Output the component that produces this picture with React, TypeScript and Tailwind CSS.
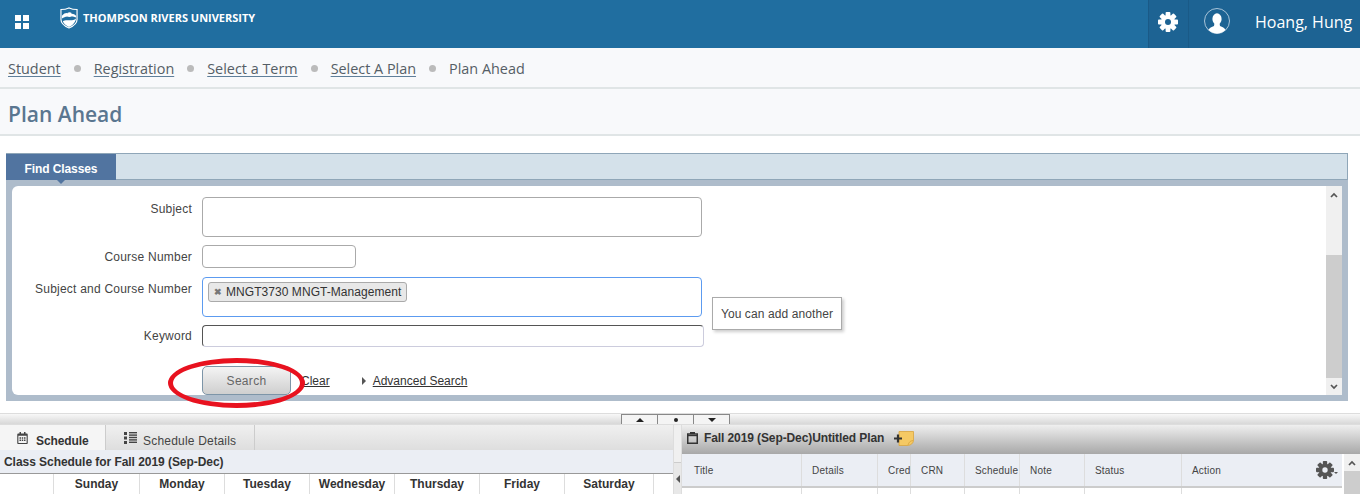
import { FaRegCalendarAlt } from "react-icons/fa";

const crumbs = ["Student", "Registration", "Select a Term", "Select A Plan"];
const days = [
  { name: "Sunday", w: "w-[86px]" },
  { name: "Monday", w: "w-[85px]" },
  { name: "Tuesday", w: "w-[85px]" },
  { name: "Wednesday", w: "w-[85px]" },
  { name: "Thursday", w: "w-[85px]" },
  { name: "Friday", w: "w-[85px]" },
  { name: "Saturday", w: "w-[89px]" },
];
const columns = [
  { name: "Title", w: "w-[120px]", pl: "pl-[12px]" },
  { name: "Details", w: "w-[76px]", pl: "pl-[10px]" },
  { name: "Cred", w: "w-[33px]", pl: "pl-[10px]" },
  { name: "CRN", w: "w-[54px]", pl: "pl-[10px]" },
  { name: "Schedule", w: "w-[55px]", pl: "pl-[10px]" },
  { name: "Note", w: "w-[65px]", pl: "pl-[10px]" },
  { name: "Status", w: "w-[97px]", pl: "pl-[10px]" },
];

const Logo = () => (
  <svg width="18" height="22" viewBox="0 0 19 23" fill="none">
    <path d="M1 2.5 C6 2.5 8 1.5 9.5 0.8 C11 1.5 13 2.5 18 2.5 V13 C18 18 13 20.5 9.5 22 C6 20.5 1 18 1 13 Z" stroke="white" strokeWidth="1.2" />
    <circle cx="10" cy="8" r="2.5" fill="white" />
    <path d="M2 9 C6 5 8 6 10 8 C12 6 15 7 17 9 L17 11 C12 9 7 9 2 12 Z" fill="white" />
    <path d="M3 15 C7 12 12 16 17 12 C16 17 12 20 9.5 21 C7 20 4 18 3 15 Z" fill="white" />
  </svg>
);

// eight square teeth, like the font-awesome cog
const Gear = ({ size, color }: { size: number; color: string }) => (
  <svg width={size} height={size} viewBox="0 0 20 20">
    {[0, 45, 90, 135].map((a) => (
      <rect key={a} x="7.6" y="0" width="4.8" height="20" rx="0.9" fill={color} transform={`rotate(${a} 10 10)`} />
    ))}
    <circle cx="10" cy="10" r="7" fill={color} />
    <circle cx="10" cy="10" r="3" fill="var(--hole)" />
  </svg>
);

const UserIcon = () => (
  <svg width="26" height="26" viewBox="0 0 26 26">
    <defs>
      <clipPath id="userClip">
        <circle cx="13" cy="13" r="12.5" />
      </clipPath>
    </defs>
    <circle cx="13" cy="13" r="12.5" fill="none" stroke="#a9c4d8" strokeWidth="1" />
    <g clipPath="url(#userClip)" fill="white">
      <ellipse cx="13" cy="11" rx="4.6" ry="5.8" />
      <path d="M10.5 15 L15.5 15 L16 18 C19 19.5 22 20 23 26 L3 26 C4 20 7 19.5 10 18 Z" />
    </g>
  </svg>
);

const ListIcon = () => (
  <svg width="13" height="12" viewBox="0 0 13 12" fill="#444">
    <rect x="0" y="0" width="3" height="3" />
    <rect x="0" y="4.5" width="3" height="3" />
    <rect x="0" y="9" width="3" height="3" />
    <rect x="5" y="0" width="8" height="1.4" />
    <rect x="5" y="2.4" width="8" height="1.4" />
    <rect x="5" y="4.8" width="8" height="1.4" />
    <rect x="5" y="7.2" width="8" height="1.4" />
    <rect x="5" y="9.6" width="8" height="1.4" />
  </svg>
);

const ClipIcon = () => (
  <svg width="11" height="12" viewBox="0 0 11 12" fill="none">
    <rect x="0.75" y="2" width="9.5" height="9.25" stroke="#333" strokeWidth="1.5" />
    <rect x="3" y="0" width="5" height="2" fill="#333" />
    <rect x="1" y="3" width="9" height="1.2" fill="#333" />
  </svg>
);

const NoteIcon = () => (
  <svg width="20" height="15" viewBox="0 0 20 15">
    <path d="M5 0.5 H19.5 V9 C19.5 12 17 14.5 13 14.5 H5 Z" fill="#f5c964" stroke="#d9a53d" strokeWidth="0.8" />
    <path d="M14 14 C15 11 16 10 19 9.5" fill="none" stroke="#d9a53d" strokeWidth="0.8" />
    <path d="M0 7.5 H8 M4 3.5 V11.5" stroke="#333" strokeWidth="2.2" />
  </svg>
);

const Arrow = ({ dir }: { dir: "up" | "down" }) => (
  <svg width="8" height="6" viewBox="0 0 8 6" fill="none">
    <path d={dir === "up" ? "M1 5 L4 2 L7 5" : "M1 1 L4 4 L7 1"} stroke="#555" strokeWidth="1.7" />
  </svg>
);

const Label = ({ children }: { children: string }) => (
  <div className="w-[180px] shrink-0 text-right text-[12px] tracking-[0.22px] text-[#444]">{children}</div>
);

export default function App() {
  return (
    <div className="relative h-[494px] w-[1360px] overflow-hidden bg-white font-['Liberation_Sans',sans-serif]">
      {/* top bar */}
      <header className="flex h-[48px] bg-[#206ea0] text-white">
        <div className="ml-[15px] mt-[15px] grid h-[14px] w-[14px] grid-cols-2 gap-[2px]">
          <span className="bg-white" />
          <span className="bg-white" />
          <span className="bg-white" />
          <span className="bg-white" />
        </div>
        <div className="ml-[31px] mt-[7px] flex h-[24px] items-start gap-[5px]">
          <Logo />
          <span className="mt-[4px] font-['Open_Sans',sans-serif] text-[11px] font-bold leading-[13px] text-white">
            THOMPSON RIVERS UNIVERSITY
          </span>
        </div>
        <div className="ml-auto flex w-[212px] bg-[#1d6393]">
          <div className="h-[48px] w-[40px] border-l border-[#1a5a87] pl-[9px] pt-[12px] [--hole:#1d6393]">
            <Gear size={20} color="#fff" />
          </div>
          <div className="flex flex-1 items-start border-l border-[#1a5a87] pl-[15px] pt-[8px]">
            <UserIcon />
            <span className="ml-[25px] font-['Open_Sans',sans-serif] text-[16px] leading-[28px] text-white">
              Hoang, Hung
            </span>
          </div>
        </div>
      </header>

      {/* breadcrumb */}
      <nav className="flex h-[41px] items-center border-b-2 border-[#e0e5e6] bg-[#f8f9fb] pl-[8px] pt-[2px] font-['Open_Sans',sans-serif] text-[14.4px] text-[#555e66]">
        {crumbs.map((c) => (
          <span key={c} className="flex items-center">
            <span className="underline decoration-[#5f7f9a] underline-offset-2">{c}</span>
            <span className="mx-[13px] h-[7px] w-[7px] rounded-full bg-[#bbb]" />
          </span>
        ))}
        <span>Plan Ahead</span>
      </nav>

      {/* page title */}
      <div className="flex h-[47px] items-center border-b-2 border-[#e0e5e6] bg-[#f8f9fb] pl-[8px] pt-[6px] font-['Open_Sans',sans-serif] text-[21px] font-semibold text-[#5a7690]">
        Plan Ahead
      </div>

      {/* find classes panel */}
      <section className="ml-[6px] mt-[17px] h-[248px] w-[1342px]">
        <div className="flex h-[27px] border border-[#8fa6b8] bg-[#d4e1ea]">
          <div className="relative -ml-px flex h-[26px] w-[110px] items-end justify-center bg-[#5174a0] pb-[2px] text-[12px] font-bold tracking-[-0.1px] text-white">
            Find Classes
            <span className="absolute -bottom-[4px] left-[51px] h-0 w-0 border-x-[4px] border-t-[4px] border-x-transparent border-t-[#5174a0]" />
          </div>
        </div>
        <div className="h-[221px] bg-[#aebccb] p-[6px]">
          <div className="flex h-[209px] rounded-l-[6px] bg-white">
            <div className="flex-1 pt-[11px]">
              <div className="flex items-start gap-[10px]">
                <div className="pt-[3px]">
                  <Label>Subject</Label>
                </div>
                <div className="h-[40px] w-[500px] rounded-[4px] border border-[#aaa] bg-white" />
              </div>
              <div className="mt-[8px] flex items-center gap-[10px]">
                <Label>Course Number</Label>
                <div className="h-[23px] w-[154px] rounded-[4px] border border-[#aaa] bg-white" />
              </div>
              <div className="mt-[9px] flex items-start gap-[10px]">
                <div className="pt-[3px]">
                  <Label>Subject and Course Number</Label>
                </div>
                <div className="h-[40px] w-[500px] rounded-[4px] border border-[#5c9bf0] bg-white pl-[5px] pt-[4px]">
                  <div className="flex h-[20px] w-[199px] items-center whitespace-nowrap rounded-[3px] border border-[#aaa] bg-[#e8e8e8] pl-[5px] text-[12px] tracking-[0.05px] text-[#333]">
                    <span className="mr-[4px] text-[9px] font-bold leading-none text-[#777]">✖</span>
                    MNGT3730 MNGT-Management
                  </div>
                </div>
                <div className="mt-[20px] flex h-[33px] w-[130px] items-center justify-center border border-[#aaa] bg-white text-[12px] tracking-[0.1px] text-[#444] shadow-[2px_2px_3px_rgba(0,0,0,0.2)]">
                  You can add another
                </div>
              </div>
              <div className="-mt-[5px] flex items-center gap-[10px]">
                <Label>Keyword</Label>
                <div className="h-[22px] w-[502px] rounded-[4px] border border-[#ccd] border-l-[#555] border-t-[#555] bg-white" />
              </div>
              <div className="ml-[190px] mt-[19px] flex items-center text-[12px] text-[#333]">
                <button className="h-[29px] w-[89px] rounded-[5px] border border-[#7d95a8] bg-gradient-to-b from-[#f4f4f4] to-[#cfcfcf] text-[12px] tracking-[0.3px] text-[#666]">
                  Search
                </button>
                <a className="ml-[10px] underline">Clear</a>
                <span className="ml-[32px] h-0 w-0 border-y-[4px] border-l-[4px] border-y-transparent border-l-[#555]" />
                <a className="ml-[7px] underline">Advanced Search</a>
              </div>
            </div>
            {/* scrollbar */}
            <div className="flex w-[16px] flex-col bg-[#f0f0f0]">
              <div className="flex h-[17px] items-center justify-center">
                <Arrow dir="up" />
              </div>
              <div className="mt-[52px] h-[123px] bg-[#cdcdcd]" />
              <div className="flex flex-1 items-center justify-center">
                <Arrow dir="down" />
              </div>
            </div>
          </div>
        </div>
      </section>

      {/* splitter */}
      <div className="mt-[12px] flex h-[12px] justify-start border-y border-[#ddd] bg-gradient-to-b from-[#f8f8f8] to-[#d8d8d8] pl-[622px]">
        {["up", "dot", "down"].map((k) => (
          <div key={k} className="-ml-px flex h-[10px] w-[37px] items-center justify-center border-x border-t border-[#888] bg-[#f4f4f4]">
            {k === "up" && <span className="h-0 w-0 border-x-[4px] border-b-[4px] border-x-transparent border-b-[#222]" />}
            {k === "dot" && <span className="h-[4px] w-[4px] rounded-full bg-[#222]" />}
            {k === "down" && <span className="h-0 w-0 border-x-[4px] border-t-[4px] border-x-transparent border-t-[#222]" />}
          </div>
        ))}
      </div>

      {/* lower panes */}
      <div className="flex h-[70px]">
        <div className="w-[673px]">
          <div className="flex h-[25px] bg-gradient-to-b from-[#f0f0f0] to-[#dedede]">
            <div className="flex w-[106px] items-start gap-[8px] border-r border-[#ccc] bg-[#f5f5f5] pl-[17px] text-[12px] font-bold tracking-[-0.1px] text-[#333]">
              <FaRegCalendarAlt className="mt-[7px] h-[12px] w-[11px] text-[#444]" />
              <span className="mt-[7px]">Schedule</span>
            </div>
            <div className="flex w-[149px] items-start gap-[6px] border-r border-[#ccc] pl-[18px] text-[12px] tracking-[0.2px] text-[#444]">
              <span className="mt-[7px]">
                <ListIcon />
              </span>
              <span className="mt-[7px]">Schedule Details</span>
            </div>
          </div>
          <div className="flex h-[24px] items-center border-b border-[#999] bg-[#ebeef4] pl-[4px] text-[12px] font-bold tracking-[-0.05px] text-[#333]">
            Class Schedule for Fall 2019 (Sep-Dec)
          </div>
          <div className="flex h-[21px] border-b border-[#ddd] bg-white text-[12px] font-bold text-[#333]">
            <div className="w-[54px] border-r border-[#ddd]" />
            {days.map((d) => (
              <div key={d.name} className={`${d.w} border-r border-[#ddd] text-center leading-[21px]`}>
                {d.name}
              </div>
            ))}
          </div>
        </div>
        <div className="flex w-[9px] flex-col border-x border-[#ddd] bg-[#f0f0f0]">
          <div className="mt-[37px] flex h-[33px] items-center justify-center border-t border-[#ccc] bg-[#e8e8e8]">
            <span className="h-0 w-0 border-y-[4px] border-r-[4px] border-y-transparent border-r-[#555]" />
          </div>
        </div>
        <div className="flex-1">
          <div className="flex h-[29px] items-center bg-gradient-to-b from-[#efefef] to-[#a8a8a8] pb-[3px] pl-[5px] text-[12px] font-bold tracking-[-0.1px] text-[#333]">
            <ClipIcon />
            <span className="ml-[6px]">Fall 2019 (Sep-Dec)Untitled Plan</span>
            <span className="ml-[10px]">
              <NoteIcon />
            </span>
          </div>
          <div className="flex">
            <div className="w-[660px]">
              <div className="flex h-[34px] border-b-2 border-[#ccc] bg-[#ebeef4] text-[10px] tracking-[0.2px] text-[#444]">
                {columns.map((c) => (
                  <div key={c.name} className={`${c.w} ${c.pl} border-r border-[#ddd] leading-[33px]`}>
                    {c.name}
                  </div>
                ))}
                <div className="flex flex-1 items-center justify-between pl-[10px] pr-[4px] [--hole:#ebeef4]">
                  <span>Action</span>
                  <span className="flex items-end">
                    <Gear size={18} color="#555" />
                    <span className="mb-[5px] h-0 w-0 border-x-[2px] border-t-[2px] border-x-transparent border-t-[#555]" />
                  </span>
                </div>
              </div>
              <div className="flex h-[7px] bg-white">
                {columns.map((c) => (
                  <div key={c.name} className={`${c.w} border-r border-[#ddd]`} />
                ))}
              </div>
            </div>
            <div className="ml-[2px] flex-1 bg-[#f0f0f0]">
              <div className="flex h-[17px] items-center justify-center">
                <Arrow dir="up" />
              </div>
              <div className="h-[30px] bg-[#cdcdcd]" />
            </div>
          </div>
        </div>
      </div>

      {/* red hand-drawn ring over the search button */}
      <div className="absolute left-[168px] top-[358px] h-[50px] w-[137px] rounded-[50%] border-[5px] border-[#e8121f]" />
    </div>
  );
}
